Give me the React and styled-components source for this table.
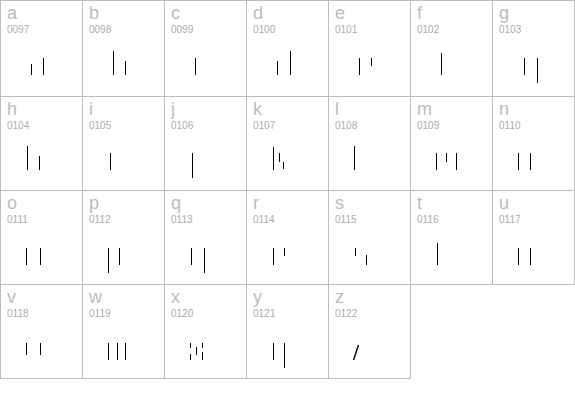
import React from 'react';
import styled, { createGlobalStyle } from 'styled-components';

const GlobalStyle = createGlobalStyle`
    html, body {
        margin: 0;
        padding: 0;
        background: #fff;
    }
`;

// 각 글자별 막대 모양 [x, 시작 y, 끝 y] (셀 바깥 기준 좌표)
const glyphs = [
    { ch: 'a', bars: [[31, 64, 75], [43, 58, 75]] },
    { ch: 'b', bars: [[31, 51, 75], [43, 61, 75]] },
    { ch: 'c', bars: [[31, 58, 75]] },
    { ch: 'd', bars: [[31, 61, 75], [44, 51, 75]] },
    { ch: 'e', bars: [[31, 58, 75], [43, 58, 66]] },
    { ch: 'f', bars: [[31, 53, 75]] },
    { ch: 'g', bars: [[32, 58, 75], [45, 58, 83]] },
    { ch: 'h', bars: [[27, 50, 74], [39, 60, 74]] },
    { ch: 'i', bars: [[28, 57, 74]] },
    { ch: 'j', bars: [[28, 57, 82]] },
    { ch: 'k', bars: [[27, 51, 74], [33, 57, 66], [37, 66, 73]] },
    { ch: 'l', bars: [[26, 50, 74]] },
    { ch: 'm', bars: [[26, 57, 74], [36, 57, 66], [46, 57, 74]] },
    { ch: 'n', bars: [[26, 57, 74], [38, 57, 74]] },
    { ch: 'o', bars: [[26, 58, 75], [40, 58, 75]] },
    { ch: 'p', bars: [[26, 58, 83], [37, 58, 75]] },
    { ch: 'q', bars: [[27, 58, 75], [40, 58, 83]] },
    { ch: 'r', bars: [[27, 58, 75], [38, 58, 66]] },
    { ch: 's', bars: [[27, 58, 66], [38, 65, 75]] },
    { ch: 't', bars: [[27, 53, 75]] },
    { ch: 'u', bars: [[26, 58, 75], [38, 58, 75]] },
    { ch: 'v', bars: [[26, 59, 71], [40, 59, 71]] },
    { ch: 'w', bars: [[26, 59, 76], [35, 59, 76], [43, 59, 76]] },
    { ch: 'x', bars: [[26, 59, 64], [26, 70, 76], [32, 63, 71], [38, 59, 64], [38, 68, 76]] },
    { ch: 'y', bars: [[27, 59, 76], [38, 59, 84]] },
    { ch: 'z', bars: [], slash: true },
];

// 위/왼쪽 테두리는 그리드가, 오른쪽/아래 테두리는 각 셀이 그림
const Grid = styled.div`
    display: grid;
    grid-template-columns: repeat(7, 82px);
    grid-template-rows: 96px 94px 94px 94px;
    width: 574px;
    border-top: 1px solid #bdbdbd;
    border-left: 1px solid #bdbdbd;
    font-family: "Liberation Sans", Arial, sans-serif;
`;

const Cell = styled.div`
    border-right: 1px solid #bdbdbd;
    border-bottom: 1px solid #bdbdbd;
    display: flex;
    flex-direction: column;
    overflow: hidden;
`;

const Letter = styled.div`
    padding: 2px 0 0 6px;
    height: 20px;
    line-height: 20px;
    font-size: 18px;
    color: #bcbcbc;
`;

const Code = styled.div`
    padding-left: 6px;
    height: 13px;
    line-height: 13px;
    font-size: 10px;
    color: #ababab;
`;

const Sample = styled.svg`
    display: block;
    margin-top: 4px;
`;

function GlyphCell({ ch, bars, slash }) {
    const code = String(ch.charCodeAt(0)).padStart(4, '0');
    return (
        <Cell>
            <Letter>{ch}</Letter>
            <Code>{code}</Code>
            <Sample width="81" height="50" viewBox="1 40 81 50">
                {bars.map(([x, y1, y2], i) => (
                    <rect key={i} x={x} y={y1} width="1" height={y2 - y1} fill="#000" />
                ))}
                {slash && <line x1="30.5" y1="61" x2="25.5" y2="76" stroke="#000" strokeWidth="1.4" />}
            </Sample>
        </Cell>
    );
}

export default function App() {
    return (
        <>
            <GlobalStyle />
            <Grid>
                {glyphs.map((g) => (
                    <GlyphCell key={g.ch} {...g} />
                ))}
            </Grid>
        </>
    );
}
